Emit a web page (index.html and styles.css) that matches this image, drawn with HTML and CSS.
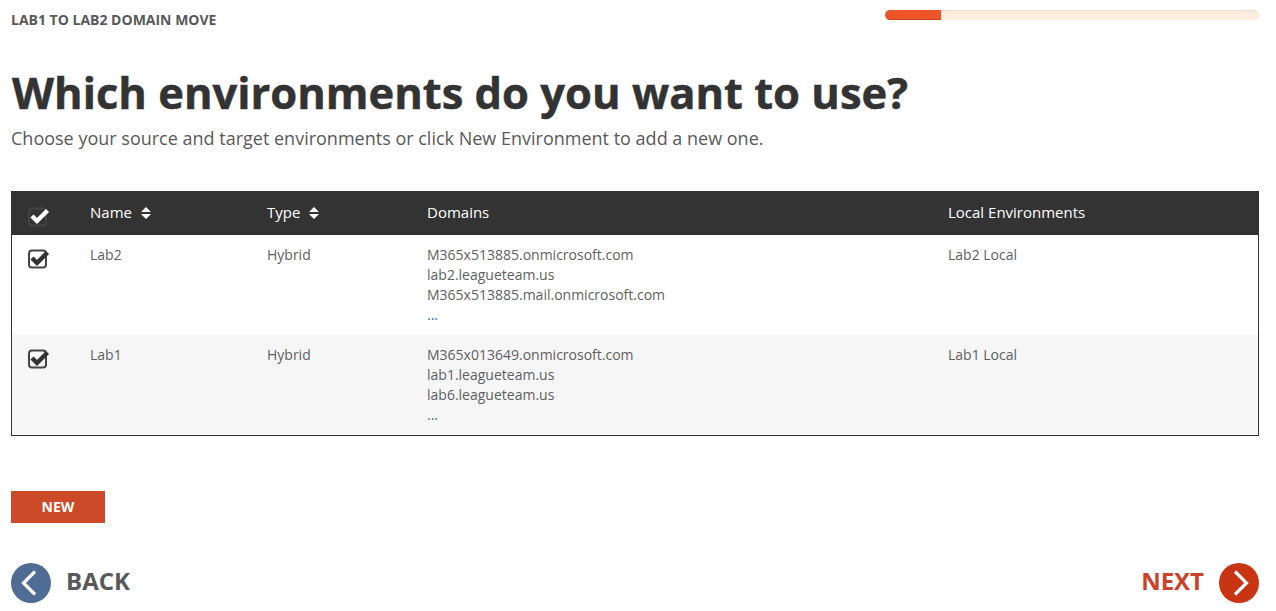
FILE: index.html
```html
<!DOCTYPE html>
<html lang="en">
<head>
<meta charset="utf-8">
<title>Lab1 to Lab2 Domain Move</title>
<link rel="stylesheet" href="styles.css">
</head>
<body>
<svg class="defs" width="0" height="0" aria-hidden="true">
  <symbol id="chk" viewBox="0 0 22 20">
    <rect class="chk-box" x="1" y="1.5" width="17" height="17" rx="3" fill="none" stroke-width="2"/>
    <path d="M4 9 L9 14 L19.5 3.5" fill="none" stroke="currentColor" stroke-width="4.4"/>
  </symbol>
  <symbol id="sort" viewBox="0 0 10 12">
    <path d="M5 0 L10 5 H0 Z M0 7 H10 L5 12 Z" fill="currentColor"/>
  </symbol>
</svg>
<main class="page">
  <header class="topbar">
    <div class="crumb">LAB1 TO LAB2 DOMAIN MOVE</div>
    <div class="progress"><div class="progress-fill"></div></div>
  </header>
  <h1 class="title">Which environments do you want to use?</h1>
  <p class="subtitle">Choose your source and target environments or click New Environment to add a new one.</p>
  <table class="envs">
    <thead>
      <tr>
        <th class="c-check"><svg class="chk chk-head"><use href="#chk"/></svg></th>
        <th class="c-name">Name <svg class="sort"><use href="#sort"/></svg></th>
        <th class="c-type">Type <svg class="sort"><use href="#sort"/></svg></th>
        <th class="c-dom">Domains</th>
        <th>Local Environments</th>
      </tr>
    </thead>
    <tbody>
      <tr>
        <td class="c-check"><svg class="chk"><use href="#chk"/></svg></td>
        <td>Lab2</td>
        <td>Hybrid</td>
        <td>M365x513885.onmicrosoft.com<br>lab2.leagueteam.us<br>M365x513885.mail.onmicrosoft.com<br><a class="more" href="#">...</a></td>
        <td>Lab2 Local</td>
      </tr>
      <tr class="alt">
        <td class="c-check"><svg class="chk"><use href="#chk"/></svg></td>
        <td>Lab1</td>
        <td>Hybrid</td>
        <td>M365x013649.onmicrosoft.com<br>lab1.leagueteam.us<br>lab6.leagueteam.us<br><a class="more" href="#">...</a></td>
        <td>Lab1 Local</td>
      </tr>
    </tbody>
  </table>
  <button class="new" type="button">NEW</button>
  <nav class="wizard">
    <a class="step back" href="#">
      <span class="disc disc-back"><svg width="40" height="40" viewBox="0 0 40 40"><path d="M24 8.5 L12.5 20 L24 31.5" fill="none" stroke="#fff" stroke-width="3.2"/></svg></span>
      <span class="step-label">BACK</span>
    </a>
    <a class="step next" href="#">
      <span class="step-label">NEXT</span>
      <span class="disc disc-next"><svg width="40" height="40" viewBox="0 0 40 40"><path d="M16 8.5 L27.5 20 L16 31.5" fill="none" stroke="#fff" stroke-width="3.2"/></svg></span>
    </a>
  </nav>
</main>
</body>
</html>
```
FILE: styles.css
```css
html, body {
  margin: 0;
  padding: 0;
  background: #fff;
}
body {
  font-family: "Open Sans", "Liberation Sans", sans-serif;
  color: #58595b;
  overflow: hidden;
}
.defs {
  display: block;
  height: 0;
}
.page {
  padding: 0 17px 0 11px;
}
.topbar {
  display: flex;
  justify-content: space-between;
  align-items: flex-start;
  height: 40px;
}
.crumb {
  font-size: 14px;
  font-weight: 700;
  line-height: 18px;
  margin-top: 11px;
}
.progress {
  width: 374px;
  height: 10px;
  margin-top: 10px;
  background: #fdeddf;
  border-radius: 5px;
  overflow: hidden;
  box-shadow: inset 0 1px 1px rgba(120, 80, 40, 0.12);
}
.progress-fill {
  width: 56px;
  height: 10px;
  background: #ed5529;
  border-bottom: 1px solid #c8451f;
  box-sizing: border-box;
}
.title {
  margin: 23px 0 0;
  padding-left: 1px;
  font-size: 43.5px;
  line-height: 60px;
  font-weight: 700;
  color: #333;
  -webkit-text-stroke: 0.5px #333;
}
.subtitle {
  margin: 0;
  font-size: 18px;
  line-height: 24px;
  height: 65px;
  padding-top: 3px;
}
.envs {
  width: 1248px;
  border-collapse: collapse;
  table-layout: fixed;
  border: 1px solid #333;
  font-size: 14px;
  line-height: 20px;
}
.envs th {
  background: #333;
  color: #fff;
  font-size: 15px;
  font-weight: 500;
  text-align: left;
  height: 39px;
  padding: 0 0 4px;
  vertical-align: middle;
}
.envs td {
  padding: 10px 0;
  height: 80px;
  vertical-align: top;
  color: #5e5f61;
}
.alt td {
  background: #f6f6f6;
}
.c-check {
  width: 78px;
}
.c-name {
  width: 177px;
}
.c-type {
  width: 160px;
}
.c-dom {
  width: 521px;
}
.envs td.c-check {
  padding: 0;
}
.chk {
  display: block;
  width: 22px;
  height: 20px;
  margin: 14px 0 0 16px;
  color: #333;
}
.chk-box {
  stroke: #444;
}
.chk-head {
  color: #fff;
  margin-top: 11px;
}
th .chk-box {
  stroke: #5c5c5c;
}
.sort {
  width: 10px;
  height: 12px;
  margin-left: 5px;
  vertical-align: -1px;
}
.more {
  color: #2f6fa8;
  text-decoration: none;
}
.new {
  display: block;
  margin: 55px 0 0;
  width: 94px;
  height: 32px;
  border: 0;
  padding: 0 0 2px;
  background: #cc4a27;
  color: #fff;
  font: 700 14px "Open Sans", sans-serif;
}
.wizard {
  display: flex;
  justify-content: space-between;
  margin-top: 40px;
}
.step {
  display: flex;
  align-items: flex-start;
  gap: 15px;
  font-size: 24px;
  font-weight: 700;
  text-decoration: none;
  color: #58595b;
}
.step-label {
  line-height: 36px;
}
.next {
  color: #c8432a;
}
.disc {
  display: block;
  width: 40px;
  height: 40px;
  border-radius: 50%;
}
.disc svg {
  display: block;
}
.disc-back {
  background: #4f6d94;
}
.disc-next {
  background: #c93512;
}
```
